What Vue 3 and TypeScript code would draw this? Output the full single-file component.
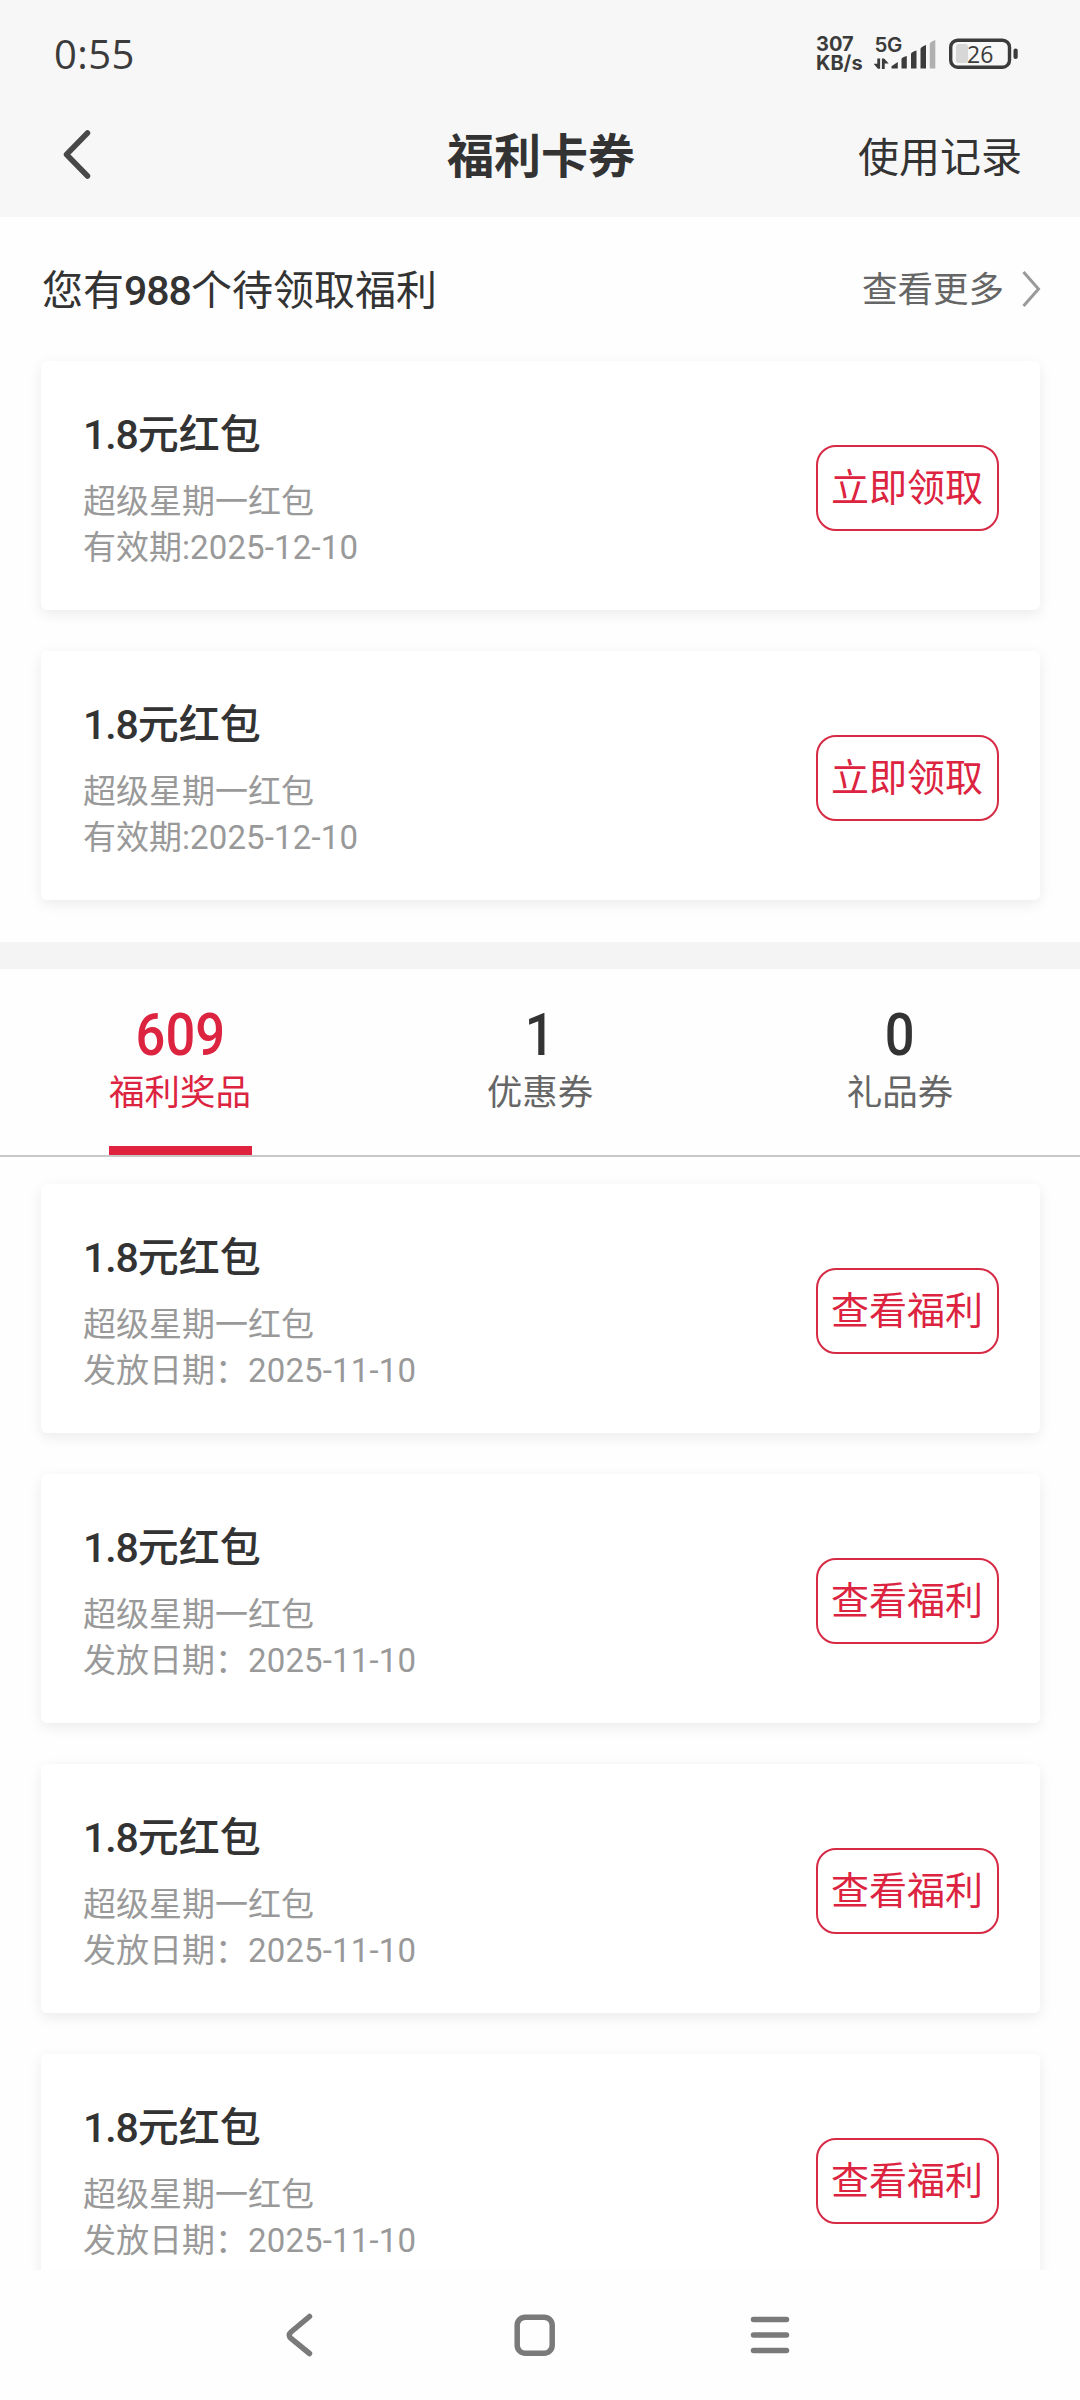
<script setup lang="ts">
interface Coupon {
  amount: string
  title: string
  desc: string
  date: string
  prefix: string
}

interface Tab {
  count: number
  label: string
  active: boolean
}

const pending: Coupon[] = Array.from({ length: 2 }, () => ({
  amount: '1.8',
  title: '元红包',
  desc: '超级星期一红包',
  prefix: '有效期:',
  date: '2025-12-10',
}))

const tabs: Tab[] = [
  { count: 609, label: '福利奖品', active: true },
  { count: 1, label: '优惠券', active: false },
  { count: 0, label: '礼品券', active: false },
]

const received: Coupon[] = Array.from({ length: 4 }, () => ({
  amount: '1.8',
  title: '元红包',
  desc: '超级星期一红包',
  prefix: '发放日期：',
  date: '2025-11-10',
}))
</script>

<template>
  <div class="screen">
    <header class="top">
      <div class="status">
        <span class="clock">0:55</span>
        <div class="speed"><b>307</b><b>KB/s</b></div>
        <svg class="signal" width="66" height="56" viewBox="0 -8 66 56">
          <text x="0.500" y="18" class="net">5G</text>
          <g fill="#3b3b3b">
            <path d="M3.300 24.500h2.800v10.200h-2.200l-4.400-5h3.800zM7.900 35V24.600h2.200l4.600 5h-4v5.400z" />
            <path d="M17.500 34.500v-2.200l6.300-4.300v6.500zM27.500 34.500v-9.500q0-1.500 5.300-3v12.500zM37 34.500V20q0-2 5.500-3.500v18zM46.500 34.500V15q0-2 5.500-4v23.500z" />
          </g>
          <path d="M55.800 34.500V10q0-2 5.500-4v28.500z" fill="#b0b0b0" />
        </svg>
        <svg class="battery" width="70" height="32" viewBox="0 0 70 32">
          <rect x="7" y="6" width="12" height="19" rx="2.500" fill="#d7d7d7" />
          <rect x="1.700" y="2.200" width="58.800" height="27" rx="7" fill="none" stroke="#3b3b3b" stroke-width="3.400" />
          <rect x="64.500" y="10.500" width="4.200" height="10.500" rx="2" fill="#3b3b3b" />
          <text x="18" y="24.500" class="level">26</text>
        </svg>
      </div>
      <nav class="title-bar">
        <svg class="back" width="30" height="50" viewBox="0 0 30 50">
          <path d="M25.500 3 4.500 24.500 25.500 46" />
        </svg>
        <h1>福利卡券</h1>
        <span class="history">使用记录</span>
      </nav>
    </header>

    <section class="pending">
      <div class="summary">
        <span class="summary-text">您有<span class="num">988</span>个待领取福利</span>
        <span class="more">查看更多</span>
        <svg class="chevron" width="20" height="38" viewBox="0 0 20 38">
          <path d="M2.500 2 17.500 19 2.500 36" />
        </svg>
      </div>
      <div class="list">
        <article v-for="(c, i) in pending" :key="i" class="card">
          <div class="info">
            <h2><span class="amount">{{ c.amount }}</span>{{ c.title }}</h2>
            <p>{{ c.desc }}</p>
            <p>{{ c.prefix }}<span class="date">{{ c.date }}</span></p>
          </div>
          <button class="action">立即领取</button>
        </article>
      </div>
    </section>

    <div class="band"></div>

    <div class="tabs">
      <div v-for="t in tabs" :key="t.label" class="tab" :class="{ active: t.active }">
        <div class="tab-inner">
          <strong>{{ t.count }}</strong>
          <span>{{ t.label }}</span>
        </div>
      </div>
    </div>

    <section class="received">
      <div class="list">
        <article v-for="(c, i) in received" :key="i" class="card">
          <div class="info">
            <h2><span class="amount">{{ c.amount }}</span>{{ c.title }}</h2>
            <p>{{ c.desc }}</p>
            <p>{{ c.prefix }}<span class="date">{{ c.date }}</span></p>
          </div>
          <button class="action">查看福利</button>
        </article>
      </div>
    </section>

    <footer class="sys-nav">
      <svg width="46" height="46" viewBox="0 0 46 46"><path d="M32.500 4.500 14 20q-3.500 3.200 0 6.400L32.500 41.500" /></svg>
      <svg width="46" height="46" viewBox="0 0 46 46"><rect x="5.200" y="5.200" width="35" height="36" rx="8" /></svg>
      <svg width="46" height="46" viewBox="0 0 46 46"><path d="M6.500 7.500h33M6.500 23h33M6.500 38.500h33" /></svg>
    </footer>
  </div>
</template>

<style>
body {
  background: #fff;
}
</style>

<style scoped>
.screen {
  width: 1080px;
  height: 2400px;
  display: flex;
  flex-direction: column;
  overflow: hidden;
  background: #fefefe;
  color: #333;
  font-family: Roboto, "Noto Sans CJK SC", sans-serif;
}
.top {
  flex: none;
  height: 217px;
  background: #f7f7f7;
}
.status {
  height: 108px;
  box-sizing: border-box;
  padding: 0 61px 0 54px;
  display: flex;
  align-items: center;
  color: #3b3b3b;
}
.clock {
  margin-right: auto;
  font: 500 40px/50px "Open Sans", sans-serif;
  letter-spacing: 0.4px;
}
.speed {
  display: flex;
  flex-direction: column;
  width: 58px;
  font: 700 20px/19px Inter, sans-serif;
}
.speed b {
  font-weight: 700;
}
.net {
  font: 600 20.500px Inter, sans-serif;
  letter-spacing: -0.5px;
  fill: #3b3b3b;
}
.battery {
  margin-left: 9px;
}
.level {
  font: 400 23px "Open Sans", sans-serif;
  fill: #3b3b3b;
}
.title-bar {
  height: 94px;
  display: grid;
  grid-template-columns: 1fr auto 1fr;
  align-items: center;
  padding: 0 58px 0 62px;
}
.back path {
  fill: none;
  stroke: #484848;
  stroke-width: 5.5;
  stroke-linecap: round;
  stroke-linejoin: round;
}
h1 {
  margin: 0;
  padding-top: 3px;
  font-size: 47px;
  line-height: 60px;
  font-weight: 700;
  transform: translateX(-1px);
}
.history {
  justify-self: end;
  padding-top: 5px;
  font-size: 41px;
  line-height: 60px;
}
.pending {
  flex: none;
  height: 725px;
}
.summary {
  height: 144px;
  display: flex;
  align-items: center;
  padding: 0 39px 0 42px;
}
.summary-text {
  margin-right: auto;
  padding-bottom: 5px;
  font-size: 41px;
}
.num {
  font-weight: 500;
  letter-spacing: -1px;
}
.more {
  padding-bottom: 5px;
  font-size: 35.500px;
  color: #666;
}
.chevron {
  margin-left: 17px;
}
.chevron path {
  fill: none;
  stroke: #999;
  stroke-width: 3;
}
.list {
  display: flex;
  flex-direction: column;
  gap: 41px;
  padding: 0 40px 0 41px;
}
.card {
  flex: none;
  height: 249px;
  box-sizing: border-box;
  display: flex;
  align-items: flex-start;
  justify-content: space-between;
  padding: 0 41px 0 42px;
  border-radius: 6px;
  background: #fff;
  box-shadow: 0 4px 14px rgba(0, 0, 0, 0.08);
}
.info {
  padding-top: 44px;
}
h2 {
  margin: 0 0 14px;
  font-size: 41px;
  line-height: 60px;
  font-weight: 500;
}
.amount {
  letter-spacing: -1.1px;
}
p {
  margin: 0;
  font-size: 33px;
  line-height: 46px;
  color: #999;
  white-space: nowrap;
}
.date {
  letter-spacing: 0.15px;
}
.action {
  margin-top: 84px;
  width: 183px;
  height: 86px;
  padding: 0 1px 1px 0;
  border: 2px solid #d62a45;
  border-radius: 20px;
  background: transparent;
  color: #dc2340;
  font: 400 38px/60px Roboto, "Noto Sans CJK SC", sans-serif;
  white-space: nowrap;
}
.band {
  flex: none;
  height: 27px;
  background: #f4f4f4;
}
.tabs {
  flex: none;
  height: 188px;
  box-sizing: border-box;
  display: flex;
  border-bottom: 2px solid #c8c8c8;
}
.tab {
  flex: 1;
  display: flex;
  justify-content: center;
}
.tab-inner {
  min-width: 143px;
  box-sizing: border-box;
  display: flex;
  flex-direction: column;
  align-items: center;
  padding-top: 36px;
  border-bottom: 9px solid transparent;
}
.tab strong {
  font-size: 59px;
  line-height: 60px;
  font-weight: 500;
  transform: scaleX(0.89);
}
.tab span {
  font-size: 35.500px;
  line-height: 56px;
  color: #666;
}
.tab.active strong,
.tab.active span {
  color: #dc2340;
}
.tab.active .tab-inner {
  border-bottom-color: #df233f;
}
.received {
  flex: 1;
  min-height: 0;
  overflow: hidden;
  padding-top: 27px;
}
.sys-nav {
  flex: none;
  height: 130px;
  box-sizing: border-box;
  display: flex;
  gap: 189px;
  padding: 42px 0 0 277px;
  background: #fefefe;
}
.sys-nav svg {
  fill: none;
  stroke: #7a7a7a;
  stroke-width: 5.500;
  stroke-linecap: round;
  stroke-linejoin: round;
}
</style>
